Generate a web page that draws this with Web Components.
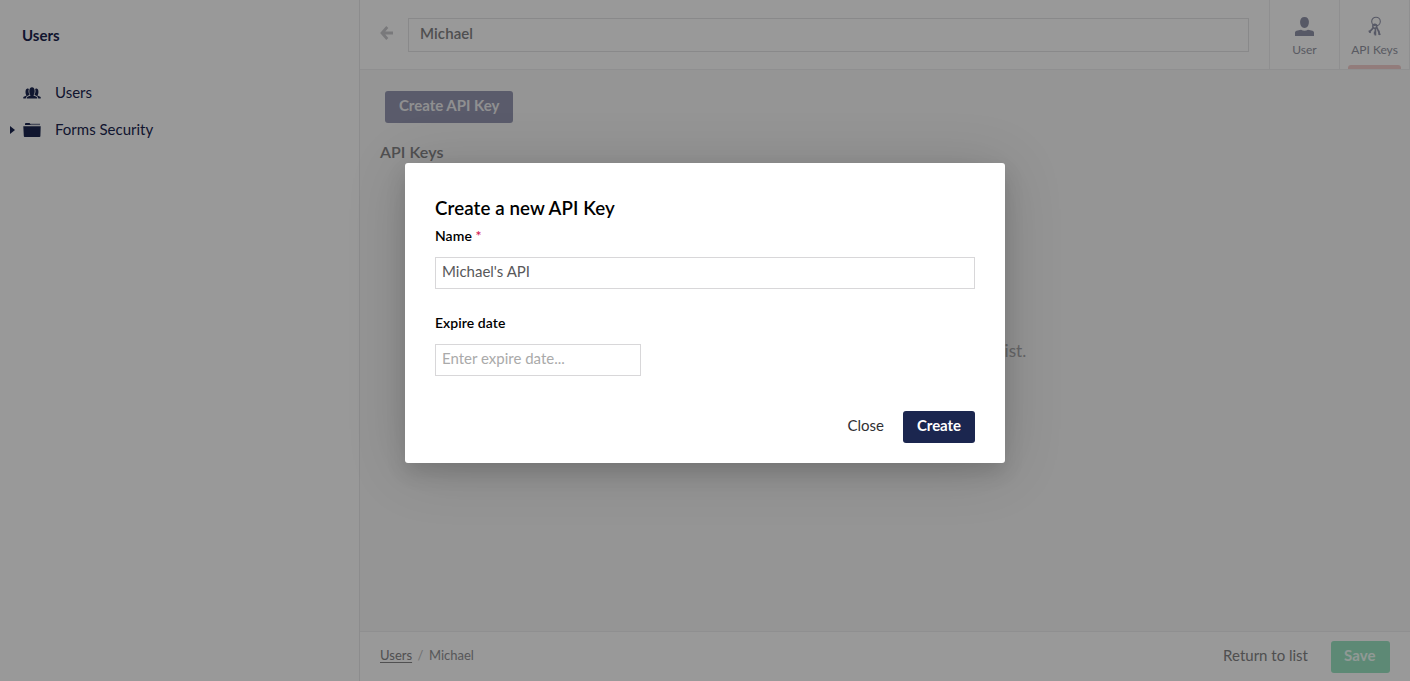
<!DOCTYPE html>
<html lang="en">
<head>
<meta charset="utf-8">
<title>Users</title>
<style>
body{margin:0;font:15px/20px Lato,sans-serif;color:#303033;background:#fff;overflow:hidden}
</style>
</head>
<body>
<app-shell></app-shell>
<script>
const define = (name, html) => customElements.define(name, class extends HTMLElement {
  constructor() {
    super();
    const t = document.createElement('template');
    t.innerHTML = html;
    this.attachShadow({mode: 'open'}).append(t.content.cloneNode(true));
  }
});

define('ui-button', `<style>
:host{display:flex;box-sizing:border-box;height:32px;padding:0 14px 4px;align-items:center;border-radius:3px;font-weight:700;letter-spacing:-.05px;color:#fff;background:var(--bg,#1b264f);white-space:nowrap}
</style><slot></slot>`);

define('tree-item', `<style>
:host{display:flex;height:37px;align-items:center;color:#1b264f}
.caret{width:23px;box-sizing:border-box;padding-left:10px;display:flex}
.icon{width:32px;display:flex}
.label{padding-bottom:1px}
</style><span class="caret"><slot name="caret"></slot></span><span class="icon"><slot name="icon"></slot></span><span class="label"><slot></slot></span>`);

define('side-tree', `<style>
:host{display:block;box-sizing:border-box;width:360px;border-right:1px solid #e9e9eb;background:#fff}
h1{margin:0;padding:25px 22px 29px;font:700 15px/20px Lato,sans-serif;color:#1b264f}
svg{display:block}
</style>
<h1>Users</h1>
<tree-item>
<svg slot="icon" width="18" height="18" viewBox="0 0 18 18" fill="#1b264f"><path d="M.3 14.500v-1.500l3.200-1.500C2.300 10.200 1.900 5 4.300 4.500c.8-.2 1.300.1 1.600.5-.8 2.200-.3 4.200.7 5.700l-2.900 1.600-1 2.200zM17.700 14.500v-1.500l-3.200-1.500c1.200-1.300 1.600-6.500-.8-7-.8-.2-1.300.1-1.600.5.8 2.200.3 4.200-.7 5.700l2.900 1.600 1 2.200z"/><path d="M3.700 14.500c0-1.700.8-2 3.900-3-1.800-1.800-2.100-8.200 1.400-8.200s3.200 6.400 1.400 8.200c3.100 1 3.900 1.300 3.900 3z"/></svg>Users</tree-item>
<tree-item>
<svg slot="caret" width="5" height="8" viewBox="0 0 5 8"><path d="M0 0l5 4-5 4z" fill="#1b264f"/></svg>
<svg slot="icon" width="18" height="18" viewBox="0 0 18 18"><path d="M2 4V2.800Q2 2 3 2h3.500l1 1H16q.7 0 .7 1z" fill="#1b264f"/><path d="M7.500 2.700h9.500v1.500H7.500z" fill="#777e97"/><path d="M.3 5.300h17.400l-.3 9.800q0 .9-.9.900H1.700q-.9 0-.9-.9z" fill="#1b264f"/></svg>Forms Security</tree-item>`);

define('nav-tab', `<style>
:host{display:flex;flex-direction:column;align-items:center;box-sizing:border-box;width:70px;height:69px;border-left:1px solid #eeeef0;padding-top:16px;font-size:12px;line-height:16px;color:#9496a3;white-space:nowrap}
.label{margin-top:6px}
.bar{width:53px;height:4px;margin-top:auto;border-radius:3px 3px 0 0;background:var(--bar,transparent)}
</style><slot name="icon"></slot><span class="label"><slot></slot></span><span class="bar"></span>`);

define('editor-header', `<style>
:host{display:flex;height:69px;border-bottom:1px solid #eeeef0;background:#fff}
.back{width:48px;box-sizing:border-box;padding:26px 0 0 20px}
.name{flex:1;box-sizing:border-box;height:34px;margin:18px 20px 0 0;padding:0 11px 4px;border:1px solid #e4e4e7;display:flex;align-items:center;font-weight:600;letter-spacing:.1px;color:#848486;background:#fff}
svg{display:block}
nav{display:flex;border-right:1px solid #eeeef0}
</style>
<div class="back"><svg width="14" height="14" viewBox="0 0 14 14" fill="none" stroke="#cacace" stroke-width="2.800"><path d="M7.300 1L2 7l5.300 6M2 7h11"/></svg></div>
<div class="name">Michael</div>
<nav>
<nav-tab><svg slot="icon" width="20" height="20" viewBox="0 0 20 20" fill="#9194aa"><path d="M9.500 1c5.700 0 5.200 8 2.300 10.200q-2.300 1.500-4.600 0C4.300 9 3.800 1 9.500 1z"/><path d="M0 20v-3.500q0-1.300 1.500-1.700l4.500-1.100q3.500 2 7 0l4.500 1.100q1.500.4 1.500 1.700V20z"/></svg>User</nav-tab>
<nav-tab style="--bar:#f4cfcd"><svg slot="icon" width="20" height="20" viewBox="0 0 20 20" fill="none" stroke="#9194aa"><circle cx="11" cy="5.500" r="4.300" stroke-width="1.100"/><circle cx="9.800" cy="10.300" r="2" stroke-width="1.500"/><path d="M8.300 11.800L4 16.300M10.400 12v7.500M11.900 11.500l3.100 7.500" stroke-width="1.700"/><path d="M3.900 14.500l1.700 2.500M9.400 15.500v3M14 14.500v4.500" stroke-width="1.200"/></svg>API Keys</nav-tab>
</nav>`);

define('editor-content', `<style>
:host{display:flex;flex-direction:column;flex:1;align-items:flex-start;background:#f8f8f8}
ui-button{margin:21px 0 0 25px;--bg:#9698b2;color:#efeff1;letter-spacing:-.03px;width:128px}
h2{margin:19px 0 0 20px;font:600 16px/20px Lato,sans-serif;letter-spacing:.06px;color:#858587}
p{align-self:stretch;margin:178px 0 0;text-align:center;font-size:17.200px;line-height:22px;color:#acacaf}
</style><ui-button>Create API Key</ui-button><h2>API Keys</h2><p>There are no items to show in the list.</p>`);

define('editor-footer', `<style>
:host{display:flex;box-sizing:border-box;height:50px;border-top:1px solid #eeeef0;padding:1px 20px 0;align-items:center;background:#fff;color:#848486}
.crumbs{flex:1;display:flex;gap:5.500px;font-size:13px;padding-bottom:4px;color:#929295}
u{color:#858588;text-underline-offset:2px}
i{font-style:normal;color:#bbb}
.return{margin-right:23px;padding-bottom:4px}
ui-button{--bg:#9be5c3;color:#f1fff9;padding:0 13px 4px;width:59px;letter-spacing:.1px}
</style><div class="crumbs"><u>Users</u><i>/</i><span>Michael</span></div><span class="return">Return to list</span><ui-button>Save</ui-button>`);

define('text-field', `<style>
:host{display:block}
label{display:block;font:600 14px/20px Lato,sans-serif;letter-spacing:.06px;color:#000}
.req{color:#d42054}
.box{box-sizing:border-box;width:var(--w,100%);height:32px;margin-top:11px;border:1px solid #d8d7d9;padding:0 6px 4px;display:flex;align-items:center;color:var(--ink,#58585a)}
</style><label><slot name="label"></slot> <span class="req"><slot name="mark"></slot></span></label><div class="box"><slot></slot></div>`);

define('key-dialog', `<style>
:host{display:flex;position:absolute;inset:0;justify-content:center;align-items:flex-start;background:rgba(0,0,0,.4)}
section{box-sizing:border-box;width:600px;height:300px;margin-top:163px;padding:33px 30px 20px;background:#fff;border-radius:3px;box-shadow:0 10px 20px rgba(0,0,0,.12),0 6px 60px rgba(0,0,0,.16);display:flex;flex-direction:column}
h2{margin:0 0 6px;font:600 18.720px/24px Lato,sans-serif;letter-spacing:.09px;color:#000}
.date{margin-top:24px}
.actions{display:flex;justify-content:flex-end;align-items:center;margin-top:auto;gap:19px}
.close{padding-bottom:4px}
</style><section><h2>Create a new API Key</h2>
<text-field><span slot="label">Name</span><span slot="mark">*</span>Michael's API</text-field>
<text-field class="date" style="--w:206px;--ink:#aaa"><span slot="label">Expire date</span>Enter expire date...</text-field>
<div class="actions"><span class="close">Close</span><ui-button>Create</ui-button></div></section>`);

define('app-shell', `<style>
:host{display:flex;position:relative;height:681px}
main{flex:1;display:flex;flex-direction:column;min-width:0}
</style><side-tree></side-tree><main><editor-header></editor-header><editor-content></editor-content><editor-footer></editor-footer></main><key-dialog></key-dialog>`);
</script>
</body>
</html>
